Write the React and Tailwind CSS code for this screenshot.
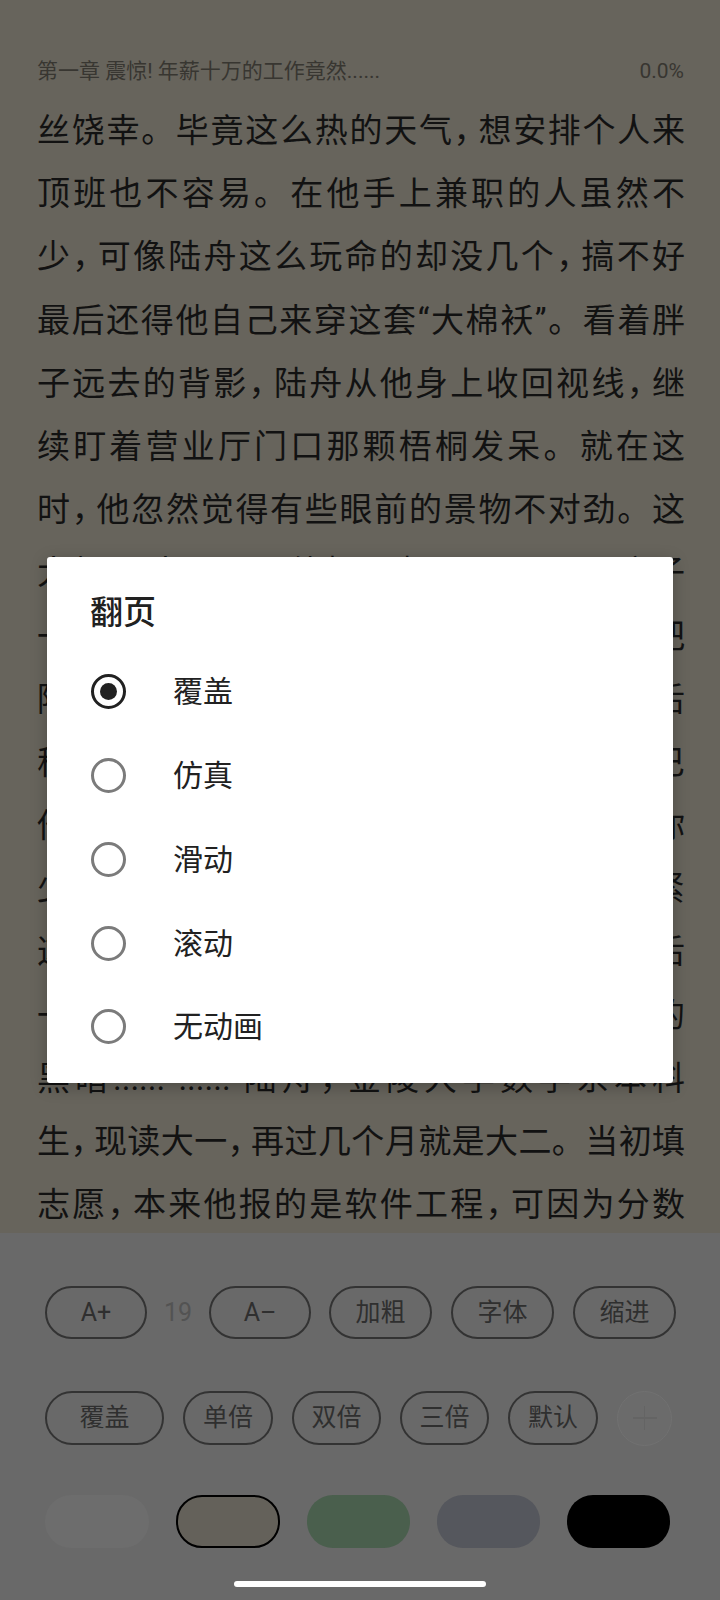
import React from "react";

const lines = [
  "丝饶幸。毕竟这么热的天气，想安排个人来",
  "顶班也不容易。在他手上兼职的人虽然不",
  "少，可像陆舟这么玩命的却没几个，搞不好",
  "最后还得他自己来穿这套“大棉袄”。看着胖",
  "子远去的背影，陆舟从他身上收回视线，继",
  "续盯着营业厅门口那颗梧桐发呆。就在这",
  "时，他忽然觉得有些眼前的景物不对劲。这",
  "大概是中暑了，他揉了揉眼，晃了晃脑子",
  "一道淡蓝色的光幕浮现在了视野中央，把",
  "陆舟愣住了，下意识往后退了一步。随后",
  "称作系统的机械音在他脑海里响起，干巴",
  "他听见那声音说道：“宿主你好，我是你",
  "少年，你已经被选中了。”陆舟心头一紧",
  "这该不会是热出幻觉了吧？他闭眼片刻后",
  "一睁眼，那光幕依然悬浮在眼前，上面的",
  "黑暗...... ...... 陆舟，金陵大学数学系本科",
  "生，现读大一，再过几个月就是大二。当初填",
  "志愿，本来他报的是软件工程，可因为分数",
];

const options = ["覆盖", "仿真", "滑动", "滚动", "无动画"];

// narrower comma, like the device font
function TextLine({ text }) {
  const parts = text.split("，");
  return (
    <div className="h-[63.2px] leading-[63.2px] text-justify [text-align-last:justify]">
      {parts.map((p, i) => (
        <React.Fragment key={i}>
          {p}
          {i < parts.length - 1 && (
            <span className="mr-[0.2em] [font-feature-settings:'halt']">，</span>
          )}
        </React.Fragment>
      ))}
    </div>
  );
}

function Pill({ children, w }) {
  return (
    <div
      className={`flex h-full shrink-0 items-center justify-center rounded-full border-2 border-[#333333] text-[25px] text-[#2f2f2f] ${w}`}
    >
      {children}
    </div>
  );
}

function Radio({ checked }) {
  return checked ? (
    <div className="flex h-[35px] w-[35px] shrink-0 items-center justify-center rounded-full border-[3.5px] border-[#212121]">
      <div className="h-[17px] w-[17px] rounded-full bg-[#212121]" />
    </div>
  ) : (
    <div className="h-[35px] w-[35px] shrink-0 rounded-full border-[3.5px] border-[#7b7b7b]" />
  );
}

export default function App() {
  return (
    <div
      lang="zh-CN"
      className="relative flex h-[1600px] w-[720px] flex-col overflow-hidden font-['Roboto','Noto_Sans_CJK_SC',sans-serif]"
    >
      {/* reading page (dimmed) */}
      <div className="h-[1233px] shrink-0 overflow-hidden bg-[#67645c] pl-[37px] pr-[35px]">
        <div className="mt-[58px] flex h-[26px] items-center justify-between text-[21px] leading-[26px] text-[#383631]">
          <span>第一章 震惊! 年薪十万的工作竟然......</span>
          <span className="pr-[1px]">0.0%</span>
        </div>
        <div className="mt-[15px] text-[33px] text-[#121212]">
          {lines.map((l, i) => (
            <TextLine key={i} text={l} />
          ))}
        </div>
      </div>

      {/* settings panel */}
      <div className="flex flex-1 flex-col bg-[#696969]">
        <div className="mt-[53px] flex h-[53px] items-center pl-[45px]">
          <Pill w="w-[102px]">A+</Pill>
          <div className="flex w-[62px] justify-center text-[25px] text-[#535353]">19</div>
          <Pill w="w-[102px]">A–</Pill>
          <div className="flex h-full gap-[19px] pl-[18px]">
            <Pill w="w-[103px]">加粗</Pill>
            <Pill w="w-[103px]">字体</Pill>
            <Pill w="w-[103px]">缩进</Pill>
          </div>
        </div>

        <div className="mt-[52px] flex h-[54px] items-center gap-[19px] pl-[45px]">
          <Pill w="w-[119px]">覆盖</Pill>
          <Pill w="w-[90px]">单倍</Pill>
          <Pill w="w-[89px]">双倍</Pill>
          <Pill w="w-[89px]">三倍</Pill>
          <Pill w="w-[90px]">默认</Pill>
          <div className="relative flex h-[55px] w-[55px] items-center justify-center rounded-full border border-[#717171] bg-[#6b6b6b]">
            <div className="absolute h-[1.5px] w-[24px] bg-[#646464]" />
            <div className="absolute h-[24px] w-[1.5px] bg-[#646464]" />
          </div>
        </div>

        <div className="mt-[50px] flex h-[53px] gap-[27px] pl-[45px]">
          <div className="h-full w-[104px] rounded-[26px] bg-[#6d6d6d]" />
          <div className="h-full w-[104px] rounded-[26px] border-2 border-black bg-[#64615a]" />
          <div className="h-full w-[103px] rounded-[26px] bg-[#4a5f4d]" />
          <div className="h-full w-[103px] rounded-[26px] bg-[#55575d]" />
          <div className="h-full w-[103px] rounded-[26px] bg-black" />
        </div>

        <div className="mx-auto mt-[33px] h-[6px] w-[252px] rounded-full bg-white" />
      </div>

      {/* page-turn dialog */}
      <div className="absolute left-[47px] top-[557px] h-[526px] w-[626px] rounded-[3px] bg-white pt-[36px] shadow-[0_4px_16px_rgba(0,0,0,0.25)]">
        <div className="pl-[43px] text-[33px] font-medium leading-[40px] text-[#212121]">翻页</div>
        <div className="mt-[17px]">
          {options.map((o, i) => (
            <div key={o} className="flex h-[83.75px] items-center pl-[44px]">
              <Radio checked={i === 0} />
              <span className="ml-[47px] text-[30px] text-[#212121]">{o}</span>
            </div>
          ))}
        </div>
      </div>
    </div>
  );
}
